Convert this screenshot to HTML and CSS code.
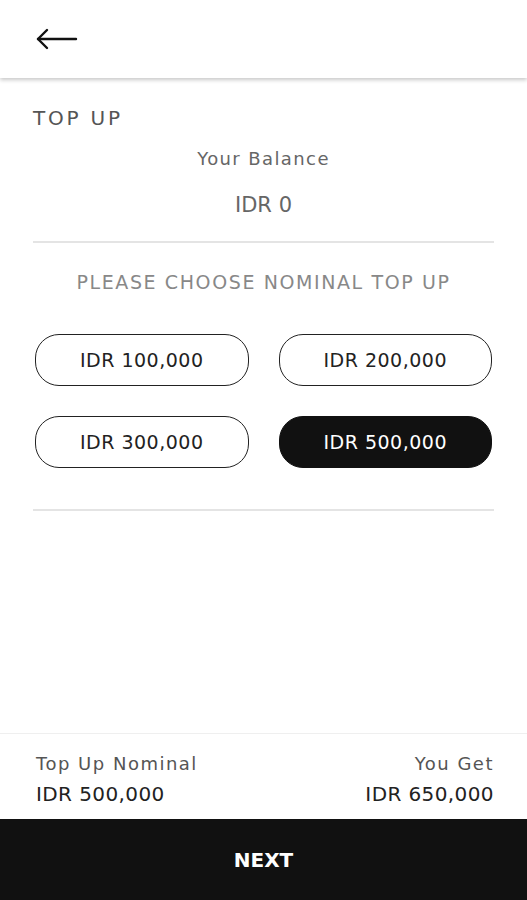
FILE: index.html
```html
<!DOCTYPE html>
<html lang="en">
<head>
  <meta charset="UTF-8">
  <title>Top Up</title>
  <link rel="stylesheet" href="styles.css">
</head>
<body>

  <header class="topbar">
    <button class="back-btn" aria-label="Back">
      <svg width="42" height="22" viewBox="0 0 42 22" fill="none" stroke="#111" stroke-width="2.4" stroke-linecap="round" stroke-linejoin="round">
        <path d="M2 11H40" />
        <path d="M11 2L2 11L11 20" />
      </svg>
    </button>
  </header>

  <main class="content">
    <h2 class="page-title">TOP UP</h2>
    <p class="balance-label">Your Balance</p>
    <p class="balance-value">IDR 0</p>

    <hr class="divider">

    <p class="choose-label">PLEASE CHOOSE NOMINAL TOP UP</p>

    <div class="nominal-grid">
      <button class="nominal">IDR 100,000</button>
      <button class="nominal">IDR 200,000</button>
      <button class="nominal">IDR 300,000</button>
      <button class="nominal active">IDR 500,000</button>
    </div>

    <hr class="divider divider-bottom">
  </main>

  <section class="summary">
    <div class="summary-col">
      <span class="summary-label">Top Up Nominal</span>
      <span class="summary-value">IDR 500,000</span>
    </div>
    <div class="summary-col right">
      <span class="summary-label">You Get</span>
      <span class="summary-value">IDR 650,000</span>
    </div>
  </section>

  <button class="next-btn">NEXT</button>

</body>
</html>
```

FILE: styles.css
```css
html, body {
  height: 100%;
}

body {
  margin: 0;
  font-family: "DejaVu Sans", sans-serif;
  background-color: #fff;
  color: #222;
  display: flex;
  flex-direction: column;
}

.topbar {
  height: 78px;
  flex-shrink: 0;
  display: flex;
  align-items: center;
  padding-left: 36px;
  background-color: #fff;
  box-shadow: 0 2px 4px rgba(0,0,0,0.22);
  position: relative;
  z-index: 1;
}

.back-btn {
  background: none;
  border: none;
  padding: 0;
  display: flex;
  cursor: pointer;
}

.content {
  flex: 1;
  padding: 0 33px;
}

.page-title {
  margin: 28px 0 0;
  font-size: 20px;
  font-weight: normal;
  line-height: 24px;
  letter-spacing: 2.8px;
  color: #555;
}

.balance-label {
  margin: 17px 0 0;
  text-align: center;
  font-size: 18px;
  line-height: 24px;
  letter-spacing: 1.4px;
  color: #666;
}

.balance-value {
  margin: 20px 0 0;
  text-align: center;
  font-size: 21px;
  line-height: 28px;
  color: #666;
}

.divider {
  border: none;
  height: 2px;
  background-color: #e4e4e4;
  margin: 22px 0 0;
}

.choose-label {
  margin: 27px 0 0;
  text-align: center;
  font-size: 19px;
  line-height: 24px;
  letter-spacing: 1.6px;
  color: #888;
}

.nominal-grid {
  display: grid;
  grid-template-columns: 1fr 1fr;
  gap: 30px;
  margin-top: 40px;
  padding: 0 2px;
}

.nominal {
  height: 52px;
  border: 1.5px solid #222;
  border-radius: 24px;
  background-color: #fff;
  color: #222;
  font-family: "DejaVu Sans", sans-serif;
  font-size: 19px;
  letter-spacing: 0.5px;
  cursor: pointer;
}

.nominal.active {
  background-color: #111;
  border-color: #111;
  color: #fff;
}

.divider-bottom {
  margin-top: 41px;
}

.summary {
  flex-shrink: 0;
  display: flex;
  justify-content: space-between;
  padding: 19px 33px 12px 36px;
  border-top: 1px solid #efefef;
}

.summary-col {
  display: flex;
  flex-direction: column;
}

.summary-col.right {
  align-items: flex-end;
}

.summary-label {
  font-size: 18px;
  line-height: 22px;
  letter-spacing: 1.5px;
  color: #555;
}

.summary-value {
  margin-top: 6px;
  font-size: 20px;
  line-height: 26px;
  letter-spacing: 0.4px;
  color: #222;
}

.next-btn {
  flex-shrink: 0;
  height: 81px;
  border: none;
  background-color: #111;
  color: #fff;
  font-family: "DejaVu Sans", sans-serif;
  font-size: 20px;
  font-weight: bold;
  cursor: pointer;
}
```
